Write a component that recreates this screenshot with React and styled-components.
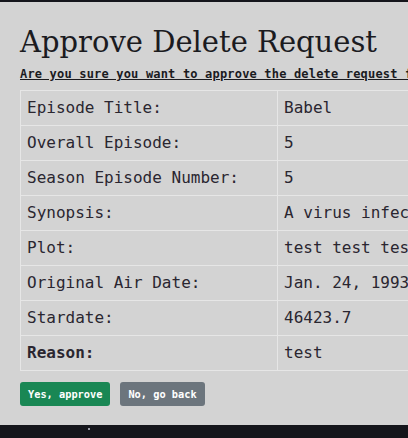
import React from "react"
import styled, { createGlobalStyle } from "styled-components"

const GlobalStyle = createGlobalStyle`
  html, body {
    margin: 0;
    padding: 0;
  }
  body {
    background-color: #14151b;
    background-image:
      radial-gradient(1px 1px at 70px 432px, #8a8c96 50%, transparent 51%),
      radial-gradient(1px 1px at 36px 433px, #6a6c76 50%, transparent 51%),
      radial-gradient(1.5px 1.5px at 89px 429px, #9a9ca6 50%, transparent 51%),
      radial-gradient(1px 1px at 355px 432px, #b0b2bc 50%, transparent 51%),
      radial-gradient(1px 1px at 175px 428px, #6a6c76 50%, transparent 51%),
      radial-gradient(1px 1px at 392px 428px, #7a7c86 50%, transparent 51%),
      radial-gradient(1px 1px at 248px 431px, #5a5c66 50%, transparent 51%);
    background-repeat: no-repeat;
    min-height: 438px;
    font-family: "DejaVu Sans Mono", monospace;
    color: #212529;
    overflow: hidden;
  }
`

const Page = styled.div`
  margin-top: 2px;
  background: #d3d3d3;
  padding: 1px 20px 19px;
  width: max-content;
  min-width: 100vw;
  box-sizing: border-box;
`

const Title = styled.h1`
  font-family: "DejaVu Serif", serif;
  font-weight: 400;
  font-size: 29px;
  line-height: 38px;
  margin: 20px 0 6px;
  color: #1b1b1f;
`

const Question = styled.p`
  font-family: "DejaVu Sans Mono", monospace;
  font-weight: bold;
  font-size: 12px;
  letter-spacing: 0.18px;
  line-height: 16px;
  text-decoration: underline;
  margin: -1px 0 8px;
  color: #1b1b1f;
  white-space: nowrap;
`

const Table = styled.table`
  border-collapse: collapse;
  margin-bottom: 11px;
`

const Cell = styled.td`
  border: 1px solid #e6e6e6;
  padding: 8px 6px;
  font-size: 16px;
  line-height: 18px;
  white-space: nowrap;
  font-weight: ${({ $bold }) => ($bold ? "bold" : "normal")};
  width: ${({ $w }) => $w || "auto"};
  color: #2a2630;
`

const Buttons = styled.div`
  display: flex;
  gap: 10px;
`

const Button = styled.button`
  font-family: "DejaVu Sans Mono", monospace;
  font-weight: bold;
  font-size: 10.3px;
  color: #fff;
  background: ${({ $bg }) => $bg};
  border: none;
  border-radius: 3px;
  height: 24px;
  padding: 0 8px;
  cursor: pointer;
`

const rows = [
  ["Episode Title:", "Babel"],
  ["Overall Episode:", "5"],
  ["Season Episode Number:", "5"],
  ["Synopsis:", "A virus infects the Enterprise crew, causing them to speak gibberish."],
  ["Plot:", "test test test test test test test test"],
  ["Original Air Date:", "Jan. 24, 1993"],
  ["Stardate:", "46423.7"],
]

export default function App() {
  return (
    <>
      <GlobalStyle />
      <Page>
        <Title>Approve Delete Request</Title>
        <Question>Are you sure you want to approve the delete request for this episode?</Question>
        <Table>
          <tbody>
            {rows.map(([label, value]) => (
              <tr key={label}>
                <Cell $w="244px">{label}</Cell>
                <Cell>{value}</Cell>
              </tr>
            ))}
            <tr>
              <Cell $bold>Reason:</Cell>
              <Cell>test</Cell>
            </tr>
          </tbody>
        </Table>
        <Buttons>
          <Button $bg="#198754">Yes, approve</Button>
          <Button $bg="#6c757d">No, go back</Button>
        </Buttons>
      </Page>
    </>
  )
}
